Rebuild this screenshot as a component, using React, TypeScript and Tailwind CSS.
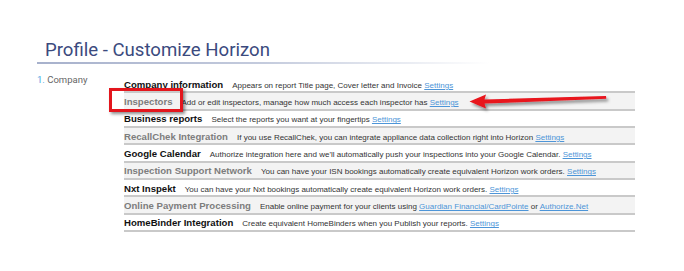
import React from "react";

type Row = {
  title: string;
  desc: React.ReactNode;
  settings?: boolean;
  alt?: boolean;
};

const Link = ({ children }: { children: React.ReactNode }) => (
  <span className="text-[#4d95d8] underline decoration-[#4d95d8]">{children}</span>
);

const rows: Row[] = [
  { title: "Company information", desc: "Appears on report Title page, Cover letter and Invoice", settings: true },
  { title: "Inspectors", desc: "Add or edit inspectors, manage how much access each inspector has", settings: true, alt: true },
  { title: "Business reports", desc: "Select the reports you want at your fingertips", settings: true },
  { title: "RecallChek Integration", desc: "If you use RecallChek, you can integrate appliance data collection right into Horizon", settings: true, alt: true },
  { title: "Google Calendar", desc: "Authorize integration here and we'll automatically push your inspections into your Google Calendar.", settings: true },
  { title: "Inspection Support Network", desc: "You can have your ISN bookings automatically create equivalent Horizon work orders.", settings: true, alt: true },
  { title: "Nxt Inspekt", desc: "You can have your Nxt bookings automatically create equivalent Horizon work orders.", settings: true },
  {
    title: "Online Payment Processing",
    desc: (
      <>
        Enable online payment for your clients using <Link>Guardian Financial/CardPointe</Link> or <Link>Authorize.Net</Link>
      </>
    ),
    alt: true,
  },
  { title: "HomeBinder Integration", desc: "Create equivalent HomeBinders when you Publish your reports.", settings: true },
];

export default function App() {
  return (
    <div className="relative w-[684px] h-[271px] overflow-hidden bg-white">
      {/* Title */}
      <div className="ml-[37px] w-[453px] pt-[38px]">
        <div
          className="pl-[8px] text-[18.6px] leading-[24px] text-[#3b4a7e]"
          style={{ fontFamily: "Roboto, 'Noto Sans', sans-serif" }}
        >
          Profile - Customize Horizon
        </div>
        <div className="h-[2px] bg-gradient-to-r from-[#a7b1cc] via-[#c4cbdd] to-transparent" />
      </div>

      {/* Section */}
      <div className="mt-[9.7px] flex">
        <div
          className="w-[124px] shrink-0 whitespace-nowrap pl-[37px] text-[9.5px] leading-[12px] text-[#666]"
          style={{ fontFamily: "Roboto, 'Noto Sans', sans-serif" }}
        >
          <span className="text-[#4aa6e4]">1.</span> Company
        </div>
        <div className="w-[511px] shrink-0 pt-[2.2px]" style={{ fontFamily: "'Liberation Sans', Arial, sans-serif" }}>
          {rows.map((r, i) => (
            <div
              key={i}
              className={`box-border h-[17.33px] border-b-2 border-[#c9c9c9] ${r.alt ? "bg-[#f3f3f3]" : "bg-white"}`}
            >
              <div className="flex items-baseline pt-[2.8px] whitespace-nowrap">
                <span
                  className={`text-[9.6px] leading-[12px] font-bold ${r.alt ? "text-[#7d7d7d]" : "text-[#111]"}`}
                >
                  {r.title}
                </span>
                <span className="ml-[9px] text-[8px] leading-[12px] text-[#333]">
                  {r.desc}
                  {r.settings && (
                    <>
                      {" "}
                      <Link>Settings</Link>
                    </>
                  )}
                </span>
              </div>
            </div>
          ))}
        </div>
      </div>

      {/* Red highlight box */}
      <div className="absolute left-[109px] top-[88px] w-[74px] h-[24px] border-[3px] border-[#e3161d] shadow-[2px_2px_3px_rgba(0,0,0,0.45)]" />

      {/* Red arrow */}
      <svg className="absolute left-[460px] top-[88px]" width="160" height="28" viewBox="0 0 160 28">
        <defs>
          <filter id="sh" x="-10%" y="-50%" width="130%" height="200%">
            <feDropShadow dx="2" dy="2.5" stdDeviation="1.5" floodColor="#000" floodOpacity="0.45" />
          </filter>
        </defs>
        <g filter="url(#sh)">
          <polygon points="9.5,13.5 26,6.5 24.5,11.5 146,8 146.3,10.8 24.5,15.6 26,20.5" fill="#e8121c" />
        </g>
      </svg>
    </div>
  );
}
